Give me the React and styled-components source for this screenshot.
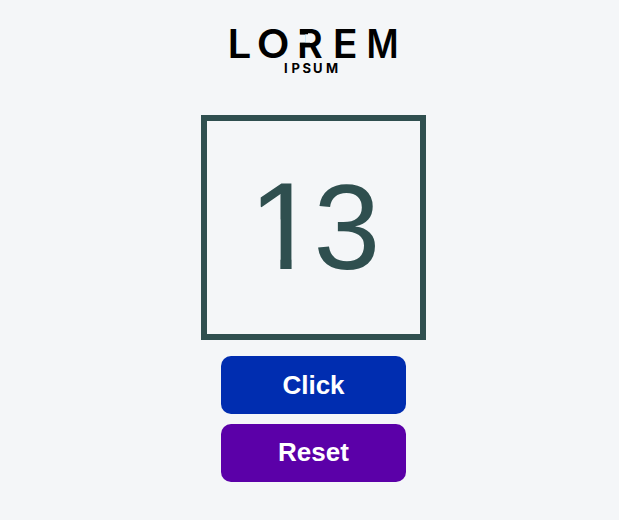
import React, { useState } from "react";
import styled, { createGlobalStyle } from "styled-components";

const GlobalStyle = createGlobalStyle`
  body {
    margin: 0;
    background: #f4f6f8;
    font-family: "Liberation Sans", Arial, sans-serif;
  }
`;

const Page = styled.main`
  box-sizing: border-box;
  height: 520px;
  padding: 20px 0 0 8px;
  display: flex;
  flex-direction: column;
  align-items: center;
`;

const Logo = styled.svg`
  display: block;
  width: 185px;
  height: 60px;
  margin-bottom: 35px;
  fill: #000;
  font-family: Inter, sans-serif;
`;

const Wordmark = styled.text`
  font-size: 39.5px;
  font-weight: 600;
`;

const Tagline = styled.text`
  font-size: 13px;
  font-weight: 700;
`;

const Counter = styled.div`
  box-sizing: border-box;
  width: 225px;
  height: 225px;
  border: 6px solid #2f4f4f;
  color: #2f4f4f;
  font-size: 120px;
  line-height: 213px;
  text-align: center;
  margin-bottom: 16px;
`;

/* A "1" without its foot: only the stem is kept below the flag. */
const DigitOne = styled.span`
  display: inline-block;
  vertical-align: top;
  clip-path: polygon(0 0, 40.6px 0, 40.6px 100%, 30px 100%, 30px 100px, 0 80px);
  transform: translateX(4px) scale(1.06, 1.03);
  transform-origin: 41px 149px;
`;

const Button = styled.button`
  width: 185px;
  height: 58px;
  margin: 0 0 10px;
  padding: 0 0 ${(p) => p.$lift || 0}px;
  border: 0;
  border-radius: 10px;
  background: ${(p) => p.$color};
  color: #fff;
  font: bold 26px "Liberation Sans", Arial, sans-serif;
  cursor: pointer;
`;

const LETTERS = [
  { glyph: "L", x: 227.5, stretch: 1.07 },
  { glyph: "O", x: 256.8, stretch: 1.08 },
  { glyph: "R", x: 297, stretch: 1 },
  { glyph: "E", x: 332.8, stretch: 1.04 },
  { glyph: "M", x: 366.5, stretch: 0.88 },
];

export default function App() {
  const [count, setCount] = useState(13);
  return (
    <>
      <GlobalStyle />
      <Page>
        <Logo viewBox="221 20 185 60" role="img" aria-label="Lorem Ipsum">
          {LETTERS.map(({ glyph, x, stretch }) => (
            <Wordmark key={glyph} transform={`translate(${x} 58.3) scale(${stretch} 1)`}>
              {glyph}
            </Wordmark>
          ))}
          <path d="M298 34.5h7.5v8.3h-7.5z" fill="#f4f6f8" />
          <path d="M300 29.6h8v4.7h-8zM300 42.8h10v4.4h-10z" />
          <Tagline x="284 291.5 302.5 313 326" y="72.5">IPSUM</Tagline>
        </Logo>
        <Counter>
          {[...String(count)].map((d, i) =>
            d === "1" ? <DigitOne key={i}>1</DigitOne> : <span key={i}>{d}</span>
          )}
        </Counter>
        <Button $color="#002db0" onClick={() => setCount(count + 1)}>Click</Button>
        <Button $color="#5b00a8" $lift={2} onClick={() => setCount(0)}>Reset</Button>
      </Page>
    </>
  );
}
